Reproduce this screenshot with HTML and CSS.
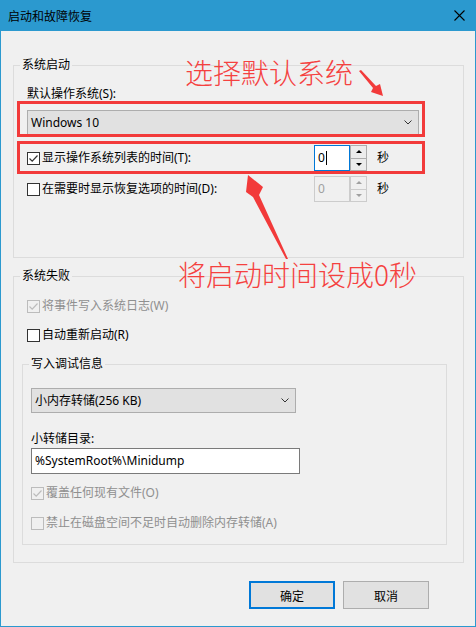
FILE: index.html
```html
<!DOCTYPE html>
<html lang="zh-CN">
<head>
    <meta charset="UTF-8">
    <title>启动和故障恢复</title>
    <link rel="stylesheet" href="styles.css">
</head>
<body>
    <div class="window">
        <div class="titlebar">
            <span class="title">启动和故障恢复</span>
            <svg class="close" width="11" height="11" viewBox="0 0 11 11">
                <path d="M0.5 0.5 L10.5 10.5 M10.5 0.5 L0.5 10.5" stroke="#000" stroke-width="1.1"/>
            </svg>
        </div>

        <div class="content">
            <!-- 系统启动 -->
            <fieldset class="group">
                <legend>系统启动</legend>
                <div class="group-body startup">
                    <div class="field-label">默认操作系统(S):</div>
                    <div class="select os-select">
                        <span>Windows 10</span>
                        <svg class="chevron" width="8" height="5" viewBox="0 0 8 5"><path d="M0.5 0.5 L4 4 L7.5 0.5" fill="none" stroke="#333"/></svg>
                    </div>

                    <div class="spin-row first">
                        <label class="check">
                            <span class="box"><svg width="11" height="11" viewBox="0 0 11 11"><path d="M1.5 5.5 L4.2 8.2 L9.5 2.5" fill="none" stroke="#333" stroke-width="1.2"/></svg></span>
                            显示操作系统列表的时间(T):
                        </label>
                        <div class="spin">
                            <span class="spin-input focused">0<span class="caret"></span></span>
                            <span class="spin-btns">
                                <span class="spin-btn"><span class="tri up"></span></span>
                                <span class="spin-btn"><span class="tri down"></span></span>
                            </span>
                        </div>
                        <span class="unit">秒</span>
                    </div>

                    <div class="spin-row">
                        <label class="check">
                            <span class="box"></span>
                            在需要时显示恢复选项的时间(D):
                        </label>
                        <div class="spin disabled">
                            <span class="spin-input">0</span>
                            <span class="spin-btns">
                                <span class="spin-btn"><span class="tri up"></span></span>
                                <span class="spin-btn"><span class="tri down"></span></span>
                            </span>
                        </div>
                        <span class="unit">秒</span>
                    </div>
                </div>
            </fieldset>

            <!-- 系统失败 -->
            <fieldset class="group failure">
                <legend>系统失败</legend>
                <div class="group-body failure-body">
                    <label class="check row disabled indent">
                        <span class="box"><svg width="11" height="11" viewBox="0 0 11 11"><path d="M1.5 5.5 L4.2 8.2 L9.5 2.5" fill="none" stroke="#bcbcbc" stroke-width="1.2"/></svg></span>
                        将事件写入系统日志(W)
                    </label>
                    <label class="check row indent second">
                        <span class="box"></span>
                        自动重新启动(R)
                    </label>

                    <fieldset class="group debug">
                        <legend>写入调试信息</legend>
                        <div class="group-body debug-body">
                            <div class="select dump-select">
                                <span>小内存转储(256 KB)</span>
                                <svg class="chevron" width="8" height="5" viewBox="0 0 8 5"><path d="M0.5 0.5 L4 4 L7.5 0.5" fill="none" stroke="#333"/></svg>
                            </div>
                            <div class="field-label dir-label">小转储目录:</div>
                            <div class="text-input">%SystemRoot%\Minidump</div>
                            <label class="check row disabled overwrite">
                                <span class="box"><svg width="11" height="11" viewBox="0 0 11 11"><path d="M1.5 5.5 L4.2 8.2 L9.5 2.5" fill="none" stroke="#bcbcbc" stroke-width="1.2"/></svg></span>
                                覆盖任何现有文件(O)
                            </label>
                            <label class="check row disabled second">
                                <span class="box"></span>
                                禁止在磁盘空间不足时自动删除内存转储(A)
                            </label>
                        </div>
                    </fieldset>
                </div>
            </fieldset>

            <div class="buttons">
                <button class="btn default">确定</button>
                <button class="btn">取消</button>
            </div>
        </div>
    </div>

    <!-- red notes drawn on top of the dialog -->
    <div class="notes">
        <div class="mark mark-os"></div>
        <div class="mark mark-time"></div>
        <div class="note note-os">选择默认系统</div>
        <div class="note note-time">将启动时间设成0秒</div>
        <svg class="arrows" width="476" height="627" viewBox="0 0 476 627">
            <polygon points="383,96 380,84 376,86 361,70 359,71 373,88 371,92" fill="#f23a3a"/>
            <polygon points="248,175 263,187 259,195 288,259 286,259 253,197 246,192" fill="#f23a3a"/>
        </svg>
    </div>
</body>
</html>
```

FILE: styles.css
```css
body {
    margin: 0;
    background: #fff;
    font-family: "Noto Sans", "Noto Sans CJK SC", sans-serif;
    font-size: 12px;
    line-height: 16px;
    color: #000;
}
.window {
    width: 476px;
    height: 627px;
    box-sizing: border-box;
    border: 1px solid #2b99cf;
    border-top: none;
    background: #f0f0f0;
}
.titlebar {
    height: 31px;
    background: #2b99cf;
    display: flex;
    align-items: center;
    padding: 0 10px 0 7px;
}
.title {
    flex: 1;
    font-family: "Noto Sans CJK SC", sans-serif;
}
.close {
    display: block;
}
.content {
    padding: 26px 11px 0 12px;
}

/* group boxes */
.group {
    margin: 0;
    padding: 0;
    min-width: 0;
    border: 1px solid #dcdcdc;
}
.group legend {
    margin-left: 6px;
    padding: 0 2px;
    line-height: 16px;
}
.startup {
    padding: 13px 0 55px 13px;
}
.failure {
    margin-top: 10px;
}
.failure-body {
    padding: 14px 16px 17px 8px;
}
.debug {
    margin-top: 13px;
}
.debug-body {
    padding: 16px 0 13px 8px;
}

.field-label {
    height: 16px;
}

/* combo boxes */
.select {
    box-sizing: border-box;
    height: 25px;
    background: #e1e1e1;
    border: 1px solid #adadad;
    display: flex;
    align-items: center;
    justify-content: space-between;
    padding: 0 6px 0 3px;
    margin-top: 8px;
}
.os-select {
    width: 392px;
}
.dump-select {
    width: 265px;
    margin-top: 0;
}
.chevron {
    display: block;
}

/* check boxes */
.check {
    display: flex;
    align-items: center;
    gap: 2px;
}
.box {
    box-sizing: border-box;
    width: 13px;
    height: 13px;
    border: 1px solid #333;
    background: #fff;
    display: flex;
    align-items: center;
    justify-content: center;
}
.check.disabled {
    color: #8f8f8f;
}
.check.disabled .box {
    border-color: #bcbcbc;
    background: #f0f0f0;
}
.row {
    height: 16px;
}
.row.indent {
    margin-left: 5px;
}
.row.second {
    margin-top: 13px;
}

/* rows with a number spinner */
.spin-row {
    display: flex;
    align-items: center;
    height: 26px;
    margin-top: 5px;
}
.spin-row.first {
    margin-top: 10px;
}
.spin-row .check {
    width: 287px;
}
.spin {
    display: flex;
    height: 26px;
}
.spin-input {
    box-sizing: border-box;
    width: 36px;
    height: 26px;
    border: 1px solid #7a7a7a;
    background: #fff;
    padding-left: 3px;
    display: flex;
    align-items: center;
}
.spin-input.focused {
    border-color: #0078d7;
}
.caret {
    width: 1px;
    height: 14px;
    background: #000;
    margin-left: 1px;
}
.spin-btns {
    display: flex;
    flex-direction: column;
    width: 17px;
}
.spin-btn {
    flex: 1;
    box-sizing: border-box;
    border: 1px solid #adadad;
    background: #ececec;
    display: flex;
    align-items: center;
    justify-content: center;
}
.spin-btn + .spin-btn {
    border-top: none;
}
.tri {
    width: 0;
    height: 0;
    border-left: 3px solid transparent;
    border-right: 3px solid transparent;
}
.tri.up {
    border-bottom: 3px solid #000;
}
.tri.down {
    border-top: 3px solid #000;
}
.spin.disabled .spin-input {
    border-color: #cccccc;
    background: #f0f0f0;
    color: #a0a0a0;
}
.spin.disabled .spin-btn {
    border-color: #cccccc;
    background: #f0f0f0;
}
.spin.disabled .tri.up {
    border-bottom-color: #a0a0a0;
}
.spin.disabled .tri.down {
    border-top-color: #a0a0a0;
}
.unit {
    margin-left: 10px;
}

/* dump folder */
.dir-label {
    margin-top: 18px;
}
.text-input {
    box-sizing: border-box;
    width: 269px;
    height: 26px;
    margin-top: 1px;
    background: #fff;
    border: 1px solid #7a7a7a;
    padding-left: 3px;
    display: flex;
    align-items: center;
}
.overwrite {
    margin-top: 11px;
}
.debug .row.second {
    margin-top: 14px;
}

/* dialog buttons */
.buttons {
    display: flex;
    justify-content: flex-end;
    gap: 8px;
    margin: 18px 35px 0 0;
}
.btn {
    box-sizing: border-box;
    width: 86px;
    height: 28px;
    background: #e1e1e1;
    border: 1px solid #adadad;
    font-family: "Noto Sans CJK SC", sans-serif;
    font-size: 12px;
    color: #000;
    padding: 0;
}
.btn.default {
    border: 2px solid #0078d7;
}

/* red notes */
.notes {
    position: absolute;
    top: 0;
    left: 0;
    width: 476px;
    height: 627px;
    pointer-events: none;
}
.mark {
    position: absolute;
    box-sizing: border-box;
    border: 3px solid #f23a3a;
    left: 17px;
    width: 408px;
}
.mark-os {
    top: 101px;
    height: 36px;
}
.mark-time {
    top: 141px;
    height: 33px;
}
.note {
    position: absolute;
    font-family: "Noto Sans CJK SC", sans-serif;
    font-size: 28px;
    font-weight: 300;
    line-height: 28px;
    color: #f5413f;
    white-space: nowrap;
}
.note-os {
    left: 185px;
    top: 58px;
}
.note-time {
    left: 178px;
    top: 260px;
}
.arrows {
    position: absolute;
    top: 0;
    left: 0;
}
```
